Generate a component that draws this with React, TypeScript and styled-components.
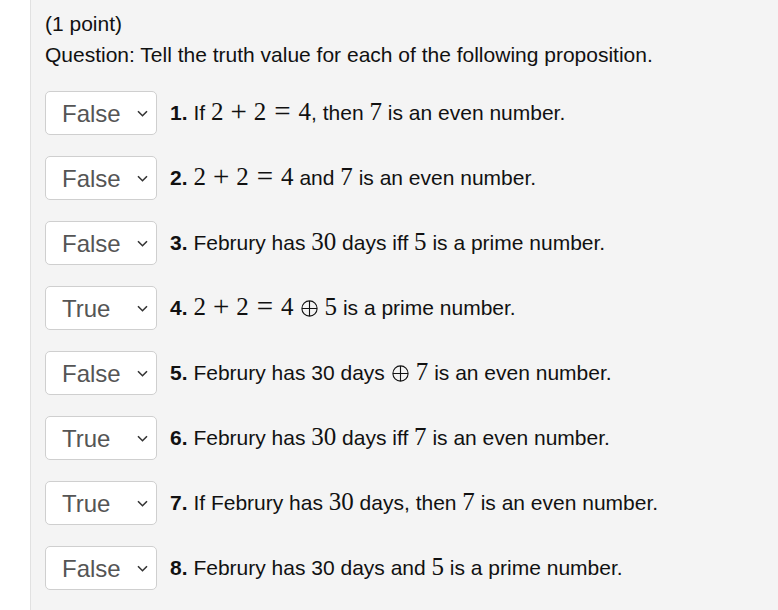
import * as React from 'react';
import styled, { createGlobalStyle } from 'styled-components';

const GlobalStyle = createGlobalStyle`
	html, body {
		margin: 0;
		padding: 0;
		background: #fff;
	}
	body {
		font-family: Arial, "Liberation Sans", sans-serif;
		color: #111;
	}
`;

const Page = styled.div`
	display: flex;
	min-height: 610px;
`;

const Gutter = styled.div`
	width: 30px;
	flex: none;
	background: #fff;
`;

const Panel = styled.div`
	flex: 1;
	background: #f4f4f4;
	border-left: 1px solid #e1e1e1;
	padding: 12px 14px 0 14px;
	font-size: 21px;
`;

const Points = styled.div`
	line-height: 24px;
	margin-bottom: 5px;
`;

const Question = styled.div`
	line-height: 28px;
	margin-bottom: 22px;
`;

const List = styled.div`
	display: flex;
	flex-direction: column;
	gap: 21px;
`;

const Row = styled.div`
	display: flex;
	align-items: center;
	gap: 13px;
`;

const SelectWrap = styled.div`
	position: relative;
	width: 112px;
	height: 44px;
	flex: none;
`;

const Select = styled.select`
	appearance: none;
	-webkit-appearance: none;
	width: 100%;
	height: 100%;
	box-sizing: border-box;
	border: 1px solid #cfcfcf;
	border-radius: 5px;
	background: #fff;
	color: #555;
	font-family: Arial, "Liberation Sans", sans-serif;
	font-size: 24px;
	padding: 0 0 0 16px;
	outline: none;
`;

const Chevron = styled.svg`
	position: absolute;
	right: 9px;
	top: 19px;
	pointer-events: none;
`;

const Label = styled.div`
	font-size: 21px;
	line-height: 28px;
	padding-bottom: 2px;
`;

const Num = styled.b`
	font-weight: bold;
`;

const M = styled.span`
	font-family: "Liberation Serif", "Times New Roman", serif;
	font-size: 25px;
`;

const Op = styled.span<{ $gap: number }>`
	font-family: "Liberation Serif", "Times New Roman", serif;
	font-size: 29px;
	line-height: 1;
	vertical-align: -1px;
	margin: 0 ${p => p.$gap}px;
`;

const Xor = () => (
	<svg width="17" height="17" viewBox="0 0 17 17" style={{ margin: '0 7px', verticalAlign: '-2px' }}>
		<circle cx="8.5" cy="8.5" r="7.6" fill="none" stroke="#111" strokeWidth="1.1" />
		<path d="M8.5 1v15M1 8.5h15" stroke="#111" strokeWidth="1.1" />
	</svg>
);

const Eq224 = () => (
	<>
		<M>2</M>
		<Op $gap={7}>+</Op>
		<M>2</M>
		<Op $gap={8}>=</Op>
		<M>4</M>
	</>
);

type Item = { answer: string; body: React.ReactNode };

const items: Item[] = [
	{
		answer: 'False',
		body: (
			<>
				If <Eq224 />, then <M>7</M> is an even number.
			</>
		),
	},
	{
		answer: 'False',
		body: (
			<>
				<Eq224 /> and <M>7</M> is an even number.
			</>
		),
	},
	{
		answer: 'False',
		body: (
			<>
				Februry has <M>30</M> days iff <M>5</M> is a prime number.
			</>
		),
	},
	{
		answer: 'True',
		body: (
			<>
				<Eq224 />
				<Xor />
				<M>5</M> is a prime number.
			</>
		),
	},
	{
		answer: 'False',
		body: (
			<>
				Februry has 30 days
				<Xor />
				<M>7</M> is an even number.
			</>
		),
	},
	{
		answer: 'True',
		body: (
			<>
				Februry has <M>30</M> days iff <M>7</M> is an even number.
			</>
		),
	},
	{
		answer: 'True',
		body: (
			<>
				If Februry has <M>30</M> days, then <M>7</M> is an even number.
			</>
		),
	},
	{
		answer: 'False',
		body: (
			<>
				Februry has 30 days and <M>5</M> is a prime number.
			</>
		),
	},
];

const TruthSelect: React.FC<{ value: string }> = ({ value }) => (
	<SelectWrap>
		<Select defaultValue={value}>
			<option value="">?</option>
			<option value="True">True</option>
			<option value="False">False</option>
		</Select>
		<Chevron width="11" height="7" viewBox="0 0 11 7">
			<path d="M1 1.2l4.5 4.5 4.5-4.5" fill="none" stroke="#333" strokeWidth="1.6" />
		</Chevron>
	</SelectWrap>
);

export default function App() {
	return (
		<>
			<GlobalStyle />
			<Page>
				<Gutter />
				<Panel>
					<Points>(1 point)</Points>
					<Question>Question: Tell the truth value for each of the following proposition.</Question>
					<List>
						{items.map((item, i) => (
							<Row key={i}>
								<TruthSelect value={item.answer} />
								<Label>
									<Num>{i + 1}.</Num> {item.body}
								</Label>
							</Row>
						))}
					</List>
				</Panel>
			</Page>
		</>
	);
}
